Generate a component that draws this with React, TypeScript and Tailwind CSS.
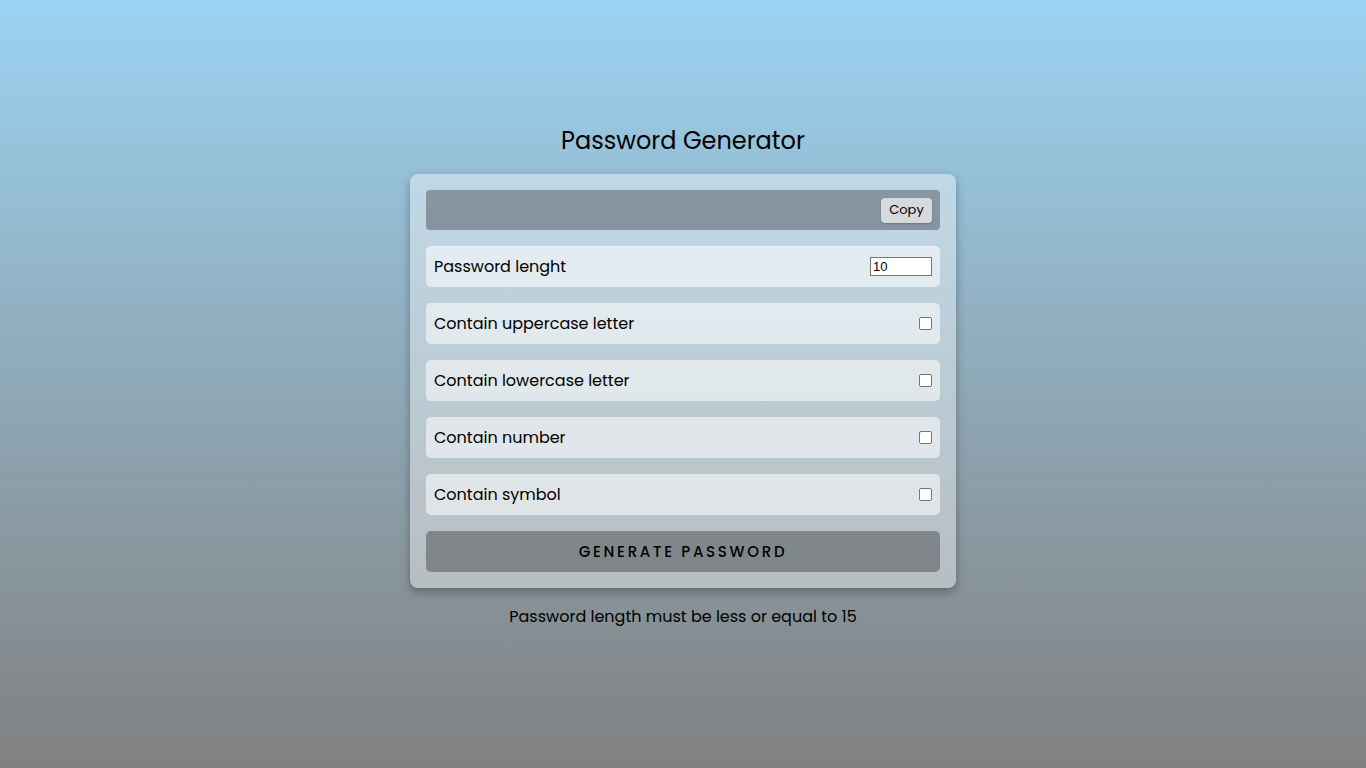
import React from "react";

const font = { fontFamily: "Poppins, Inter, 'Noto Sans', sans-serif" };

function Row({ label, children }: { label: string; children: React.ReactNode }) {
  return (
    <div className="flex h-[41px] items-center justify-between rounded-[5px] bg-white/55 px-2">
      <span className="text-[16px] text-black">{label}</span>
      {children}
    </div>
  );
}

function Check() {
  return <div className="h-[13px] w-[13px] rounded-[2px] border border-[#767676] bg-white" />;
}

export default function App() {
  return (
    <div
      className="flex min-h-[768px] w-full flex-col items-center bg-gradient-to-b from-[#9bd3f2] to-[#808080] font-['Inter',sans-serif]"
      style={font}
    >
      <h1 className="mt-[125px] text-[24px] leading-[32px] font-normal text-black">Password Generator</h1>
      <div className="mt-[17px] flex w-[546px] flex-col gap-4 rounded-[8px] bg-white/40 p-4 shadow-[0_4px_10px_rgba(0,0,0,0.3)]">
        <div className="flex h-[40px] items-center justify-end rounded-[4px] bg-black/30 pr-2">
          <button className="h-[25px] w-[51px] rounded-[4px] bg-[#d6dadd] text-[13px] text-black shadow-[0_1px_2px_rgba(0,0,0,0.2)]">
            Copy
          </button>
        </div>
        <Row label="Password lenght">
          <div className="flex h-[19px] w-[62px] items-center border border-[#767676] bg-white px-[2px] font-['Liberation_Sans',sans-serif] text-[13px] text-black">
            10
          </div>
        </Row>
        <Row label="Contain uppercase letter">
          <Check />
        </Row>
        <Row label="Contain lowercase letter">
          <Check />
        </Row>
        <Row label="Contain number">
          <Check />
        </Row>
        <Row label="Contain symbol">
          <Check />
        </Row>
        <button className="h-[41px] rounded-[5px] bg-black/30 pt-[1px] text-[15px] font-medium tracking-[2.7px] text-black">
          GENERATE PASSWORD
        </button>
      </div>
      <p className="mt-[17px] text-[16px] leading-[24px] text-black">Password length must be less or equal to 15</p>
    </div>
  );
}
